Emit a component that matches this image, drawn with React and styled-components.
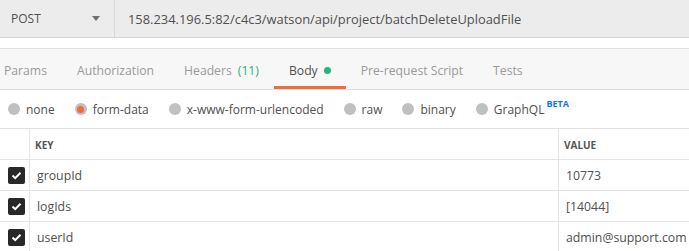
import React from 'react'
import styled, { createGlobalStyle } from 'styled-components'

const GlobalStyle = createGlobalStyle`
  body {
    margin: 0;
    background: #fff;
    font-family: "Open Sans", "Liberation Sans", sans-serif;
    color: #505050;
    overflow: hidden;
  }
`

const tabs = [
  { label: 'Params' },
  { label: 'Authorization' },
  { label: 'Headers', count: 11 },
  { label: 'Body', active: true, dot: true },
  { label: 'Pre-request Script' },
  { label: 'Tests' },
]

const bodyTypes = [
  { label: 'none' },
  { label: 'form-data', checked: true },
  { label: 'x-www-form-urlencoded' },
  { label: 'raw' },
  { label: 'binary' },
  { label: 'GraphQL', beta: true },
]

const params = [
  { key: 'groupId', value: '10773' },
  { key: 'logIds', value: '[14044]' },
  { key: 'userId', value: 'admin@support.com' },
]

const Page = styled.div`
  width: 689px;
  height: 251px;
  overflow: hidden;
`

const UrlBar = styled.div`
  display: flex;
  height: 37px;
  background: #ececec;
  border-bottom: 1px solid #d6d6d6;
`

const Method = styled.div`
  width: 115px;
  box-sizing: border-box;
  display: flex;
  align-items: center;
  justify-content: space-between;
  padding: 0 14px 0 11px;
  border-right: 1px solid #d6d6d6;
  font-size: 12px;
  color: #505050;
`

const Caret = styled.span`
  width: 0;
  height: 0;
  border-left: 4px solid transparent;
  border-right: 4px solid transparent;
  border-top: 5px solid #707070;
`

const Url = styled.div`
  display: flex;
  align-items: center;
  padding-left: 13px;
  font-size: 12.9px;
  color: #505050;
`

const Spacer = styled.div`
  height: 10px;
  border-bottom: 1px solid #e0e0e0;
`

const TabBar = styled.div`
  display: flex;
  height: 40px;
  background: #f7f7f7;
  border-bottom: 1px solid #e0e0e0;
  margin-left: -11px;
`

const Tab = styled.div`
  display: flex;
  align-items: center;
  gap: 6px;
  padding: 3px 15px 0;
  font-size: 12.2px;
  color: ${p => (p.$active ? '#505050' : '#9a9a9a')};
  box-shadow: ${p => (p.$active ? 'inset 0 -3px 0 #f26b3a' : 'none')};
`

const Count = styled.span`
  color: #26b47f;
`

const Dot = styled.span`
  width: 7px;
  height: 7px;
  border-radius: 50%;
  background: #26b47f;
`

const RadioRow = styled.div`
  display: flex;
  align-items: center;
  gap: 20px;
  height: 38px;
  padding-left: 8px;
  border-bottom: 1px solid #e0e0e0;
`

const RadioItem = styled.label`
  display: flex;
  align-items: center;
  gap: 6px;
  font-size: 12px;
  color: #505050;
`

const Radio = styled.span`
  width: 12px;
  height: 12px;
  border-radius: 50%;
  background: #c0c0c0;
  display: flex;
  align-items: center;
  justify-content: center;

  &::after {
    content: '';
    display: ${p => (p.$checked ? 'block' : 'none')};
    width: 7px;
    height: 7px;
    border-radius: 50%;
    background: #f26b3a;
  }
`

const Beta = styled.sup`
  font-size: 9px;
  font-weight: 700;
  color: #097bed;
  margin-left: -4px;
  align-self: flex-start;
  margin-top: -4px;
`

const Table = styled.div`
  display: grid;
  grid-template-columns: 29px 529px 1fr;
`

const Cell = styled.div`
  display: flex;
  align-items: center;
  height: 31px;
  box-sizing: border-box;
  border-bottom: 1px solid #e4e4e4;
  border-left: ${p => (p.$first ? 'none' : '1px solid #e4e4e4')};
  padding-left: ${p => (p.$first ? '8px' : p.$head ? '5px' : '7px')};
  padding-top: ${p => (p.$head ? '2px' : '0')};
  font-size: ${p => (p.$head ? '10px' : '12.3px')};
  font-weight: ${p => (p.$head ? 700 : 400)};
  color: ${p => (p.$head ? '#555' : '#505050')};
`

const Check = styled.span`
  width: 17px;
  height: 17px;
  border-radius: 2px;
  background: #282828;
  display: flex;
  align-items: center;
  justify-content: center;
`

const App = () => (
  <Page>
    <GlobalStyle />
    <UrlBar>
      <Method>
        POST
        <Caret />
      </Method>
      <Url>158.234.196.5:82/c4c3/watson/api/project/batchDeleteUploadFile</Url>
    </UrlBar>
    <Spacer />
    <TabBar>
      {tabs.map(t => (
        <Tab key={t.label} $active={t.active}>
          <span>{t.label}</span>
          {t.count && <Count>({t.count})</Count>}
          {t.dot && <Dot />}
        </Tab>
      ))}
    </TabBar>
    <RadioRow>
      {bodyTypes.map(b => (
        <RadioItem key={b.label}>
          <Radio $checked={b.checked} />
          {b.label}
          {b.beta && <Beta>BETA</Beta>}
        </RadioItem>
      ))}
    </RadioRow>
    <Table>
      <Cell $head $first />
      <Cell $head>KEY</Cell>
      <Cell $head>VALUE</Cell>
      {params.map(p => (
        <React.Fragment key={p.key}>
          <Cell $first>
            <Check>
              <svg width="11" height="9" viewBox="0 0 11 9">
                <path d="M1.5 4.5 L4.2 7.2 L9.5 1.8" fill="none" stroke="#fff" strokeWidth="2" />
              </svg>
            </Check>
          </Cell>
          <Cell>{p.key}</Cell>
          <Cell>{p.value}</Cell>
        </React.Fragment>
      ))}
    </Table>
  </Page>
)

export default App
